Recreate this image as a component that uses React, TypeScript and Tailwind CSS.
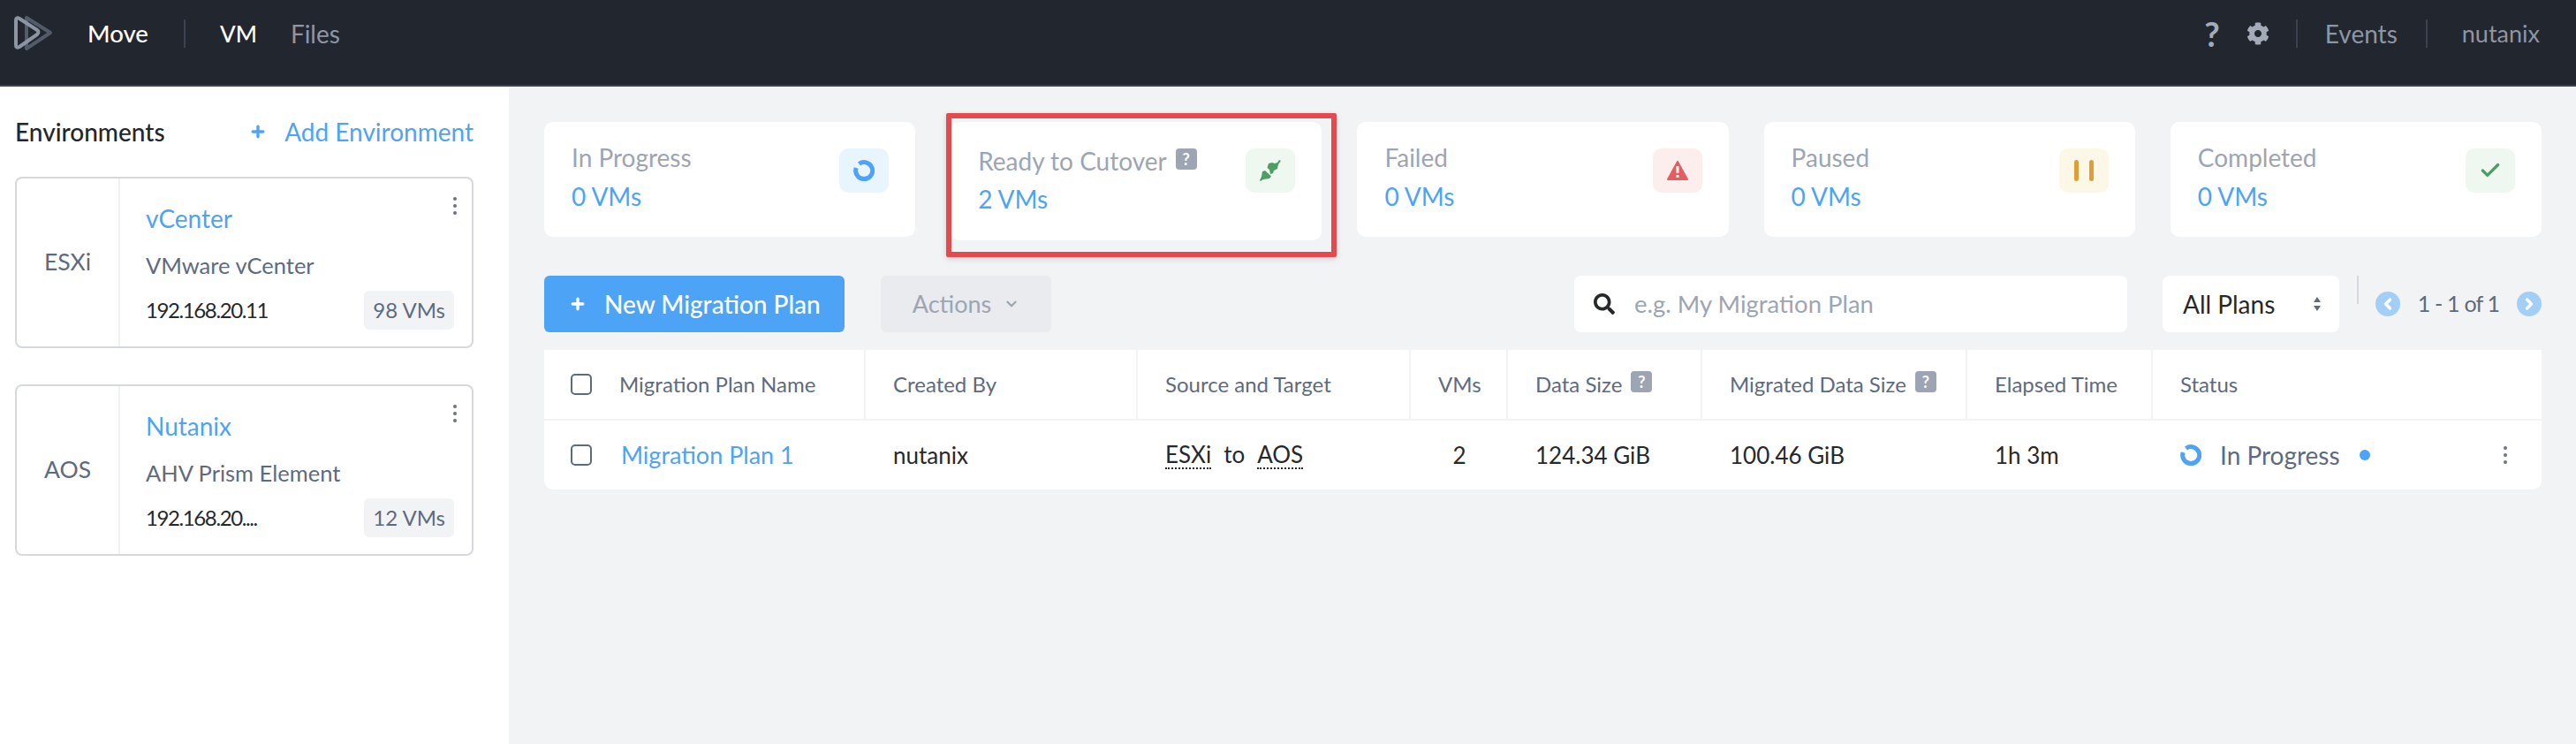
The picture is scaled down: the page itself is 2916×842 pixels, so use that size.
import { Check, ChevronDown, ChevronLeft, ChevronRight, Plus } from "lucide-react";
import { FaCog, FaSearch } from "react-icons/fa";

const font = "font-['Lato','Liberation_Sans',sans-serif]";

function Logo() {
  return (
    <svg width="46" height="44" viewBox="0 0 46 44" fill="none" strokeWidth="4" strokeLinejoin="round">
      <path d="M14 4 L41 21 L14 39 Z" stroke="#525b6a" />
      <path d="M2 7 Q2 3 6 5 L26 18 Q29 20 26 23 L6 37 Q2 39 2 35 Z" stroke="#8c95a4" />
    </svg>
  );
}

function Ring({ size = 24 }: { size?: number }) {
  return (
    <svg width={size} height={size} viewBox="0 0 24 24" fill="none">
      <path d="M6.5 4.5 A9.5 9.5 0 1 1 3.2 9" stroke="#4da3f5" strokeWidth="5" />
    </svg>
  );
}

function Plugs() {
  return (
    <svg width="24" height="24" viewBox="0 0 24 24" fill="#4c9e63">
      <path d="M24 1 L21 5 L20 10 L16 12 L15 15 L12 16 L11 11 L8.5 9 L10 4 L14 3 L17 4 L20 3 L22 0 Z" />
      <path d="M0 23 L2 19 L3 13 L6 12 L13 18.5 L11 21 L4 22 L1 24 Z" />
    </svg>
  );
}

function Warn() {
  return (
    <svg width="24" height="24" viewBox="0 0 24 24">
      <path d="M12 2 L23 22 L1 22 Z" fill="#e35f5f" stroke="#e35f5f" strokeWidth="2" strokeLinejoin="round" />
      <rect x="10.5" y="7" width="3" height="8" fill="#fbeeec" />
      <rect x="10.5" y="17" width="3" height="3" fill="#fbeeec" />
    </svg>
  );
}

function PauseBars() {
  return (
    <div className="flex gap-[12px]">
      <span className="h-[24px] w-[5px] rounded-full bg-[#e09f36]" />
      <span className="h-[24px] w-[5px] rounded-full bg-[#e09f36]" />
    </div>
  );
}

function Help() {
  return (
    <span className="inline-flex h-[24px] w-[24px] items-center justify-center rounded-[4px] bg-[#9da5b3] text-[18px] font-bold leading-none text-white">
      ?
    </span>
  );
}

function Kebab() {
  return (
    <div className="flex flex-col gap-[4px]">
      <i className="block h-[4px] w-[4px] rounded-full bg-[#6b7380]" />
      <i className="block h-[4px] w-[4px] rounded-full bg-[#6b7380]" />
      <i className="block h-[4px] w-[4px] rounded-full bg-[#6b7380]" />
    </div>
  );
}

function EnvCard({ type, name, desc, ip, vms }: { type: string; name: string; desc: string; ip: string; vms: string }) {
  return (
    <div className="flex h-[194px] w-[519px] rounded-[8px] border-2 border-[#d5d9df]">
      <div className="flex w-[117px] items-center justify-center border-r-2 border-[#f0f1f3] text-[26.5px] text-[#5d6b80]">
        {type}
      </div>
      <div className="relative flex-1 pl-[29px] pr-[20px] pt-[29px]">
        <div className="absolute right-[17px] top-[21px]">
          <Kebab />
        </div>
        <div className="text-[28px] leading-[32px] text-[#4da3f5]">{name}</div>
        <div className="mt-[21px] text-[25.5px] leading-[32px] text-[#5d6b80]">{desc}</div>
        <div className="mt-[13px] flex items-center justify-between">
          <span className="text-[24px] tracking-[-1.4px] text-[#26282c]">{ip}</span>
          <span className="flex h-[44px] items-center rounded-[6px] bg-[#f2f3f5] px-[10px] text-[24px] text-[#5d6b80]">
            {vms}
          </span>
        </div>
      </div>
    </div>
  );
}

function StatCard({ label, count, box, icon, help }: { label: string; count: string; box: string; icon: React.ReactNode; help?: boolean }) {
  return (
    <div className={`flex justify-between rounded-[10px] bg-white pl-[31px] pr-[30px] pt-[30px] ${help ? "h-[134px] w-full" : "h-[130px]"}`}>
      <div className={help ? "" : "-mt-[2px]"}>
        <div className="flex items-start gap-[10px] text-[28px] leading-[24px] text-[#9da5b3]">
          <span className={help ? "mt-[2px]" : ""}>{label}</span>
          {help && <Help />}
        </div>
        <div className={`${help ? "mt-[15px]" : "mt-[16px]"} text-[28px] leading-[32px] text-[#4da3f5]`}>{count}</div>
      </div>
      <div className={`flex h-[50px] w-[56px] items-center justify-center rounded-[10px] ${box}`}>{icon}</div>
    </div>
  );
}

const headers = ["Migration Plan Name", "Created By", "Source and Target", "VMs", "Data Size", "Migrated Data Size", "Elapsed Time", "Status"];
const gridCols = "grid-cols-[364px_308px_309px_110px_220px_300px_210px_439px]";

export default function App() {
  return (
    <div className={`flex h-[842px] flex-col bg-[#f2f3f5] ${font}`}>
      <header className="flex h-[98px] items-start border-b-2 border-[#3c4350] bg-[#22262e] pl-[16px] pr-[41px] pt-[16px]">
        <Logo />
        <div className="flex h-[44px] flex-1 items-center text-[28px]">
          <span className="ml-[37px] text-[27.5px] font-medium text-white">Move</span>
          <span className="ml-[40px] h-[32px] w-[2px] bg-[#3c4350]" />
          <span className="ml-[39px] text-[26px] font-medium text-white">VM</span>
          <span className="ml-[38px] text-[#8e96a4]">Files</span>
          <span className="ml-auto text-[38px] font-bold text-[#a3abb8]">?</span>
          <FaCog className="ml-[30px] h-[26px] w-[26px] text-[#a3abb8]" />
          <span className="ml-[30px] h-[32px] w-[2px] bg-[#3c4350]" />
          <span className="ml-[31px] text-[#8e96a4]">Events</span>
          <span className="ml-[32px] h-[32px] w-[2px] bg-[#3c4350]" />
          <span className="ml-[39px] text-[27px] text-[#8e96a4]">nutanix</span>
        </div>
      </header>

      <div className="flex flex-1">
        <aside className="w-[576px] bg-white pl-[17px] pt-[31px]">
          <div className="flex h-[40px] w-[519px] items-center justify-between">
            <span className="text-[28px] font-medium text-[#22262e]">Environments</span>
            <span className="flex items-center gap-[20px] text-[28px] text-[#4da3f5]">
              <Plus className="h-[20px] w-[20px]" strokeWidth={4} />
              Add Environment
            </span>
          </div>
          <div className="mt-[31px] flex flex-col gap-[41px]">
            <EnvCard type="ESXi" name="vCenter" desc="VMware vCenter" ip="192.168.20.11" vms="98 VMs" />
            <EnvCard type="AOS" name="Nutanix" desc="AHV Prism Element" ip="192.168.20...." vms="12 VMs" />
          </div>
        </aside>

        <main className="flex-1 pl-[40px] pr-[39px] pt-[40px]">
          <div className="grid grid-cols-5 items-start gap-[40px]">
            <StatCard label="In Progress" count="0 VMs" box="bg-[#e9f5fd]" icon={<Ring />} />
            <div className="relative">
              <StatCard label="Ready to Cutover" count="2 VMs" box="bg-[#eef8f1]" icon={<Plugs />} help />
              <div className="pointer-events-none absolute left-[-5px] top-[-10px] h-[163px] w-[442px] rounded-[2px] border-[6px] border-[#e4494d] shadow-[0_2px_6px_rgba(0,0,0,0.15)]" />
            </div>
            <StatCard label="Failed" count="0 VMs" box="bg-[#fbeeec]" icon={<Warn />} />
            <StatCard label="Paused" count="0 VMs" box="bg-[#fdf7e8]" icon={<PauseBars />} />
            <StatCard label="Completed" count="0 VMs" box="bg-[#eef8f1]" icon={<Check className="h-[26px] w-[26px] text-[#4c9e63]" strokeWidth={3} />} />
          </div>

          <div className="mt-[40px] flex h-[64px] items-start">
            <button className="flex h-[64px] w-[340px] items-center gap-[20px] rounded-[6px] bg-[#4da3f5] pl-[28px] text-[28px] font-medium text-white">
              <Plus className="h-[20px] w-[20px]" strokeWidth={4} />
              New Migration Plan
            </button>
            <button className="ml-[41px] flex h-[64px] w-[193px] items-center justify-center gap-[14px] rounded-[6px] bg-[#e9ebee] text-[27px] text-[#9da5b3]">
              Actions
              <ChevronDown className="h-[18px] w-[18px]" strokeWidth={3} />
            </button>
            <div className="ml-[592px] flex h-[64px] w-[626px] items-center gap-[22px] rounded-[8px] bg-white pl-[22px] text-[27.5px] text-[#9da5b3]">
              <FaSearch className="h-[24px] w-[24px] text-[#26282c]" />
              e.g. My Migration Plan
            </div>
            <div className="ml-[40px] flex h-[64px] w-[200px] items-center justify-between rounded-[8px] bg-white pl-[23px] pr-[20px] text-[28px] text-[#26282c]">
              All Plans
              <svg width="10" height="18" viewBox="0 0 10 18" fill="#5d6b80">
                <path d="M5 1 L9 7 L1 7 Z M5 17 L1 11 L9 11 Z" />
              </svg>
            </div>
            <span className="ml-[20px] h-[32px] w-[2px] bg-[#d5d9df]" />
            <div className="ml-[19px] mt-[18px] flex h-[28px] flex-1 items-center justify-between text-[25px] tracking-[-0.8px] text-[#5d6b80]">
              <span className="flex h-[28px] w-[28px] items-center justify-center rounded-full bg-[#a3cff6]">
                <ChevronLeft className="h-[20px] w-[20px] text-white" strokeWidth={4} />
              </span>
              1 - 1 of 1
              <span className="flex h-[28px] w-[28px] items-center justify-center rounded-full bg-[#a3cff6]">
                <ChevronRight className="h-[20px] w-[20px] text-white" strokeWidth={4} />
              </span>
            </div>
          </div>

          <div className="mt-[20px] rounded-b-[10px] bg-white">
            <div className={`grid h-[80px] border-b-2 border-[#f2f3f5] ${gridCols}`}>
              {headers.map((h, i) => (
                <div
                  key={h}
                  className={`flex items-center gap-[10px] text-[24px] text-[#5d6b80] ${i === 0 ? "pl-[30px]" : "pl-[31px]"} ${i < 7 ? "border-r-2 border-[#f2f3f5]" : ""}`}
                >
                  {i === 0 && <span className="mr-[21px] h-[24px] w-[24px] rounded-[5px] border-2 border-[#5d6b80]" />}
                  {h}
                  {(h === "Data Size" || h === "Migrated Data Size") && (
                    <span className="mb-[10px]">
                      <Help />
                    </span>
                  )}
                </div>
              ))}
            </div>
            <div className={`grid h-[78px] items-center text-[26px] text-[#26282c] ${gridCols}`}>
              <div className="flex items-center gap-[33px] pl-[30px]">
                <span className="h-[24px] w-[24px] shrink-0 rounded-[5px] border-2 border-[#5d6b80]" />
                <span className="text-[27px] text-[#4da3f5]">Migration Plan 1</span>
              </div>
              <div className="pl-[31px]">nutanix</div>
              <div className="flex gap-[14px] pl-[31px]">
                <span className="border-b-2 border-dotted border-[#26282c] leading-[30px]">ESXi</span>
                <span className="leading-[30px]">to</span>
                <span className="border-b-2 border-dotted border-[#26282c] leading-[30px]">AOS</span>
              </div>
              <div className="text-center">2</div>
              <div className="pl-[31px]">124.34 GiB</div>
              <div className="pl-[31px]">100.46 GiB</div>
              <div className="pl-[31px]">1h 3m</div>
              <div className="flex items-center pl-[31px] pr-[38px]">
                <Ring />
                <span className="ml-[21px] text-[28px] text-[#5d6b80]">In Progress</span>
                <span className="ml-[22px] h-[12px] w-[12px] rounded-full bg-[#4da3f5]" />
                <span className="ml-auto">
                  <Kebab />
                </span>
              </div>
            </div>
          </div>
        </main>
      </div>
    </div>
  );
}
